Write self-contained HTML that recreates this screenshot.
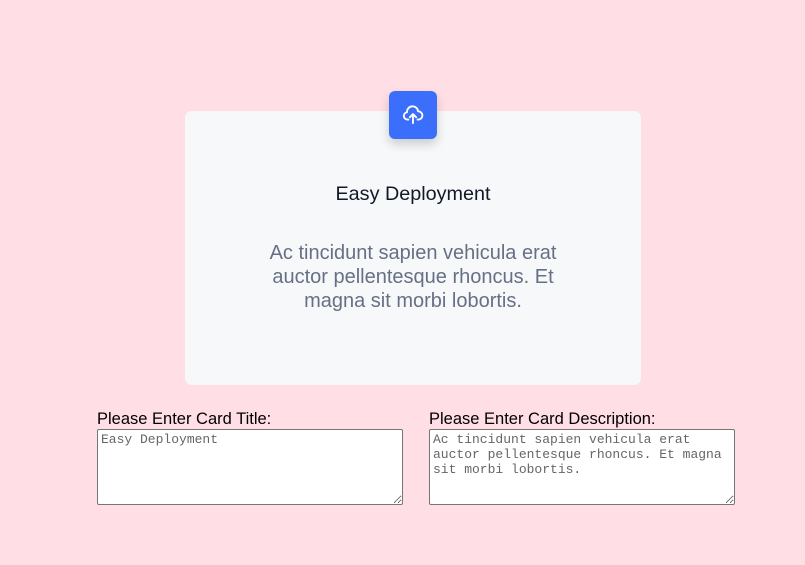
<!DOCTYPE html>
<html><head><style>
body{margin:0;width:805px;height:565px;background:#ffdfe5;font-family:"Liberation Sans",sans-serif;position:relative;overflow:hidden}
.card{position:absolute;left:185px;top:111px;width:456px;height:274px;background:#f7f8fa;border-radius:7px}
.icon{position:absolute;left:389px;top:91px;width:48px;height:48px;background:#3b6ffb;border-radius:6px;box-shadow:0 5px 10px rgba(0,0,0,.18);display:flex;align-items:center;justify-content:center}
.t{position:absolute;left:185px;width:456px;text-align:center;top:183px;font-size:19.8px;color:#111827}
.d{position:absolute;left:240px;width:346px;text-align:center;top:241px;font-size:20px;line-height:24px;color:#667085}
.lab{position:absolute;top:410px;font-size:16.5px;color:#000}
textarea{position:absolute;top:429px;height:76px;box-sizing:border-box;border:1px solid #767676;border-radius:2px;background:#fff;font-family:"Liberation Mono",monospace;font-size:13px;color:#666;padding:2px 3px;resize:both;margin:0;line-height:15px}
</style></head><body>
<div class="card"></div>
<div class="icon"><svg width="22" height="22" viewBox="0 0 24 24" fill="none" stroke="#fff" stroke-width="2" stroke-linecap="round" stroke-linejoin="round"><path d="M7 17H6a4 4 0 0 1-.5-7.97A6 6 0 0 1 17.5 8 4.5 4.5 0 0 1 18 17h-1"/><path d="M12 21v-10M8.5 14.5 12 11l3.5 3.5"/></svg></div>
<div class="t">Easy Deployment</div>
<div class="d">Ac tincidunt sapien vehicula erat auctor pellentesque rhoncus. Et magna sit morbi lobortis.</div>
<div class="lab" style="left:97px">Please Enter Card Title:</div>
<div class="lab" style="left:429px">Please Enter Card Description:</div>
<textarea style="left:97px;width:306px">Easy Deployment</textarea>
<textarea style="left:429px;width:306px">Ac tincidunt sapien vehicula erat auctor pellentesque rhoncus. Et magna sit morbi lobortis.</textarea>
</body></html>
